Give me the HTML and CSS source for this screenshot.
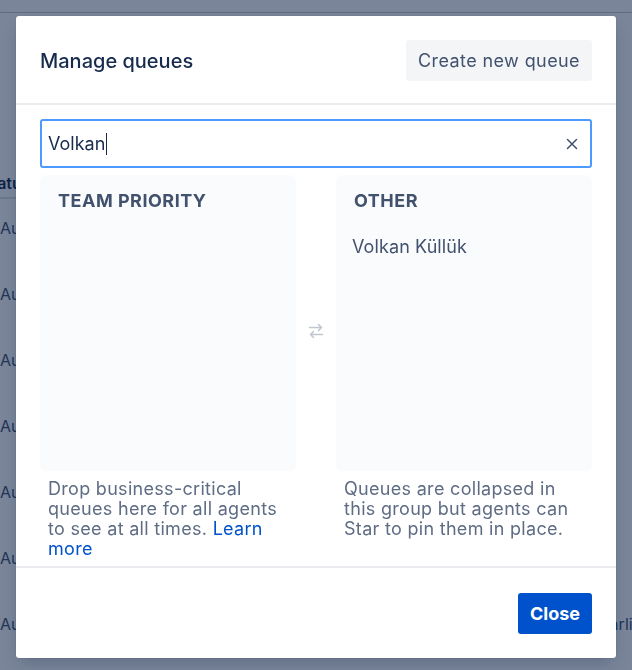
FILE: index.html
```html
<!DOCTYPE html>
<html>
  <head>
    <title>Manage queues</title>
    <meta name="viewport" content="width=device-width, initial-scale=1">
    <link rel="stylesheet" href="styles.css">
  </head>
  <body>
  <div class="page">
    <div class="topbar"></div>
    <div class="queue-table">
      <div class="row head">
        <span class="cell-main">Status</span>
        <span class="cell-side"></span>
      </div>
      <div class="row"><span class="cell-main">Auto</span><span class="cell-side"></span></div>
      <div class="row"><span class="cell-main">Auto</span><span class="cell-side"></span></div>
      <div class="row"><span class="cell-main">Auto</span><span class="cell-side"></span></div>
      <div class="row"><span class="cell-main">Auto</span><span class="cell-side"></span></div>
      <div class="row"><span class="cell-main">Auto</span><span class="cell-side"></span></div>
      <div class="row"><span class="cell-main">Auto</span><span class="cell-side"></span></div>
      <div class="row"><span class="cell-main">Auto</span><span class="cell-side">Earlier</span></div>
    </div>
  </div>

  <div class="blanket"></div>

  <div class="modal">
    <div class="modal-header">
      <h1>Manage queues</h1>
      <button class="btn">Create new queue</button>
    </div>
    <div class="modal-body">
      <div class="search">
        <span class="search-text">Volkan</span><span class="caret"></span>
        <svg class="clear" width="12" height="12" viewBox="0 0 12 12">
          <path d="M1.5 1.5l9 9M10.5 1.5l-9 9" stroke="#42526e" stroke-width="1.5" stroke-linecap="round"/>
        </svg>
      </div>
      <div class="groups">
        <div class="group">
          <div class="card">
            <h2>Team priority</h2>
          </div>
          <p class="hint">Drop business-critical queues here for all agents to see at all times. <a href="#">Learn more</a></p>
        </div>
        <div class="swap">
          <svg width="16" height="16" viewBox="0 0 16 16" fill="none" stroke="#c1c7d0" stroke-width="1.6" stroke-linecap="round" stroke-linejoin="round">
            <path d="M1.5 4.5h12M10.5 1.5l3 3-3 3"/>
            <path d="M14.5 11.5h-12M5.5 8.5l-3 3 3 3"/>
          </svg>
        </div>
        <div class="group">
          <div class="card">
            <h2>Other</h2>
            <div class="queue">Volkan Küllük</div>
          </div>
          <p class="hint">Queues are collapsed in this group but agents can Star to pin them in place.</p>
        </div>
      </div>
    </div>
    <div class="modal-footer">
      <button class="btn primary">Close</button>
    </div>
  </div>
  </body>
</html>
```

FILE: styles.css
```css
* {
  font-family: Inter, "Noto Sans", sans-serif;
  box-sizing: border-box;
  margin: 0px;
  padding: 0px;
}
body {
  background-color: white;
  color: #42526e;
  overflow: hidden;
}
.topbar {
  height: 13px;
  border-bottom: 1px solid #c1c7d0;
}
.queue-table {
  margin-top: 146px;
  font-size: 16px;
}
.row {
  display: flex;
  justify-content: space-between;
  height: 66px;
  line-height: 20px;
  white-space: nowrap;
}
.row span {
  padding-top: 19px;
}
.row.head {
  height: 40px;
  font-weight: 600;
  color: #172b4d;
}
.row.head span {
  padding-top: 14px;
}
.row.head .cell-main {
  flex: 1;
  text-indent: -19px;
  border-bottom: 2px solid #dfe1e6;
}
.cell-side {
  width: 32px;
  overflow: hidden;
}
.blanket {
  position: fixed;
  top: 0;
  left: 0;
  right: 0;
  bottom: 0;
  background-color: rgba(9,30,66,0.54);
}
.modal {
  position: fixed;
  top: 16px;
  left: 16px;
  width: 600px;
  height: 642px;
  background-color: white;
  border-radius: 3px;
  box-shadow: 0 0 1px rgba(9,30,66,0.3), 0 8px 16px -4px rgba(9,30,66,0.25);
  display: flex;
  flex-direction: column;
}
.modal-header {
  display: flex;
  justify-content: space-between;
  align-items: center;
  padding: 24px 24px 22px 24px;
  border-bottom: 2px solid #ebecf0;
}
.modal-header h1 {
  font-size: 20px;
  font-weight: 500;
  color: #172b4d;
}
.btn {
  border: none;
  border-radius: 3px;
  height: 41px;
  padding: 0px 12px;
  font-size: 18px;
  letter-spacing: 0.4px;
  color: #42526e;
  background-color: #f4f5f7;
}
.btn.primary {
  background-color: #0052cc;
  color: white;
  font-weight: 700;
  letter-spacing: 0px;
  padding: 0px 12px;
}
.modal-body {
  flex: 1;
  overflow: hidden;
  padding: 14px 24px 0px 24px;
}
.search {
  display: flex;
  align-items: center;
  height: 49px;
  border: 2px solid #4c9aff;
  border-radius: 3px;
  padding: 0px 12px 0px 6px;
  font-size: 18px;
  color: #172b4d;
}
.caret {
  width: 1px;
  height: 22px;
  margin-left: 1px;
  background-color: #172b4d;
}
.clear {
  margin-left: auto;
}
.groups {
  display: grid;
  grid-template-columns: 1fr 40px 1fr;
  margin-top: 7px;
}
.card {
  height: 296px;
  background-color: #fafbfc;
  border-radius: 6px;
  padding: 16px 16px;
}
.card h2 {
  font-size: 18px;
  font-weight: 700;
  line-height: 20px;
  letter-spacing: 0.5px;
  text-transform: uppercase;
  padding-left: 2px;
  color: #42526e;
}
.queue {
  margin-top: 26px;
  font-size: 18px;
  letter-spacing: 0.1px;
  line-height: 20px;
  color: #42526e;
}
.swap {
  display: flex;
  justify-content: center;
  align-items: center;
  height: 296px;
  padding-top: 16px;
}
.swap svg {
  display: block;
}
.hint {
  margin-top: 8px;
  padding: 0px 4px 0px 8px;
  font-size: 18px;
  letter-spacing: 0.3px;
  line-height: 20px;
  color: #5e6c84;
}
.hint a {
  color: #0052cc;
  text-decoration: none;
}
.modal-footer {
  display: flex;
  justify-content: flex-end;
  padding: 25px 24px 24px 24px;
  border-top: 2px solid #ebecf0;
}
```
